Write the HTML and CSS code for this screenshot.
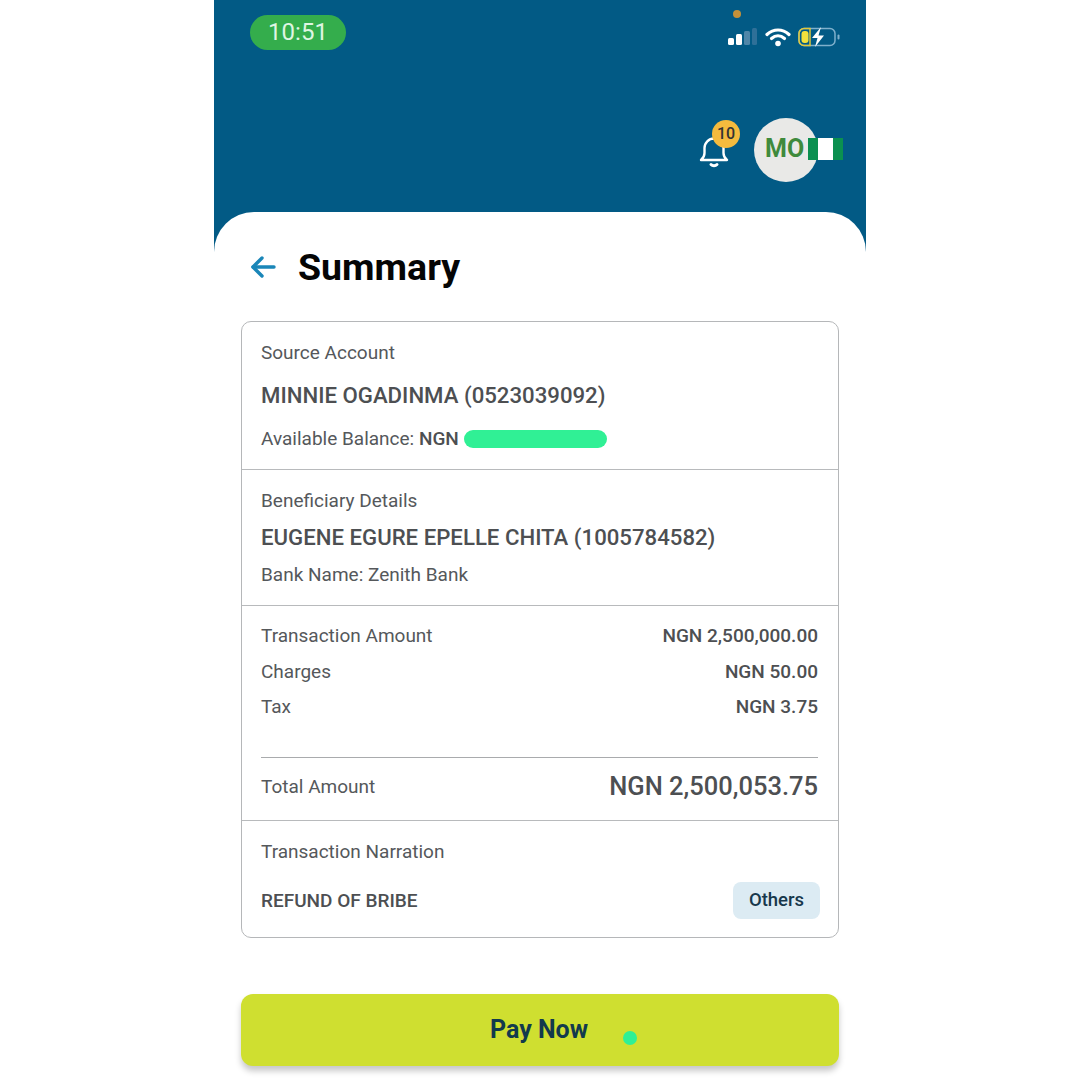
FILE: index.html
```html
<!DOCTYPE html>
<html lang="en">
<head>
    <meta charset="UTF-8">
    <title>Summary</title>
    <link rel="stylesheet" href="styles.css">
</head>
<body>
    <div class="phone">
        <div class="header">
            <div class="status-bar">
                <div class="time-pill">10:51</div>
                <div class="status-icons">
                    <svg width="30" height="18" viewBox="0 0 30 18">
                        <rect x="0" y="10" width="6" height="7" rx="1.5" fill="#fff"/>
                        <rect x="8" y="6" width="6" height="11" rx="1.5" fill="#fff"/>
                        <rect x="16" y="3" width="6" height="14" rx="1.5" fill="#4f86a8"/>
                        <rect x="24" y="0" width="5" height="17" rx="1.5" fill="#2f7098"/>
                    </svg>
                    <svg width="26" height="20" viewBox="0 0 26 20" fill="none" stroke="#fff" stroke-linecap="round">
                        <path d="M2 7.500C8.500 1.500 17.500 1.500 24 7.500" stroke-width="3.200"/>
                        <path d="M6.500 11.500C10.500 8 15.500 8 19.500 11.500" stroke-width="3.200"/>
                        <circle cx="13" cy="16.500" r="2.800" fill="#fff" stroke="none"/>
                    </svg>
                    <svg width="42" height="20" viewBox="0 0 42 20" fill="none">
                        <rect x="1" y="1.500" width="36" height="17" rx="5" stroke="#7fb0cc" stroke-width="1.500"/>
                        <rect x="3.500" y="4" width="7" height="12" rx="3" fill="#f2e13c"/>
                        <path d="M1 6.500a5 5 0 0 1 5-5h6v17H6a5 5 0 0 1-5-5z" stroke="#e0c83a" stroke-width="1.500"/>
                        <path d="M23 0l-9 11h5.500l-2.500 9 9-11.500h-5.500z" fill="#fff"/>
                        <rect x="39.500" y="7.500" width="2" height="5" rx="1" fill="#7fb0cc"/>
                    </svg>
                </div>
            </div>
            <span class="camera-dot"></span>
            <div class="header-actions">
                <div class="bell-wrap">
                    <svg width="30" height="36" viewBox="0 0 30 36" fill="none" stroke="#fff" stroke-width="2.400" stroke-linejoin="round" stroke-linecap="round">
                        <path d="M2 28c2.500-2 3.500-4 3.500-7v-5a9.500 9.500 0 0 1 19 0v5c0 3 1 5 3.500 7z"/>
                        <path d="M12 32.500c1.500 1.500 4.500 1.500 6 0" stroke-width="3"/>
                    </svg>
                    <span class="bell-badge">10</span>
                </div>
                <div class="avatar">
                    MO
                    <span class="flag"><i></i></span>
                </div>
            </div>
        </div>

        <div class="sheet">
            <div class="title-row">
                <svg width="26" height="24" viewBox="0 0 26 24" fill="none" stroke="#1a86b8" stroke-width="3.400" stroke-linecap="round" stroke-linejoin="round">
                    <path d="M24 12H3"/>
                    <path d="M12 3l-9 9 9 9"/>
                </svg>
                <h1>Summary</h1>
            </div>

            <div class="card">
                <div class="section source">
                    <div class="label">Source Account</div>
                    <div class="name">MINNIE OGADINMA (0523039092)</div>
                    <div class="label">Available Balance: <b>NGN</b><span class="scribble"></span></div>
                </div>
                <div class="section beneficiary">
                    <div class="label">Beneficiary Details</div>
                    <div class="name">EUGENE EGURE EPELLE CHITA (1005784582)</div>
                    <div class="label">Bank Name: Zenith Bank</div>
                </div>
                <div class="section amounts">
                    <div class="row"><span class="label">Transaction Amount</span><b class="value">NGN 2,500,000.00</b></div>
                    <div class="row"><span class="label">Charges</span><b class="value">NGN 50.00</b></div>
                    <div class="row"><span class="label">Tax</span><b class="value">NGN 3.75</b></div>
                    <div class="row total">
                        <span class="label">Total Amount</span><b class="total-value">NGN 2,500,053.75</b>
                    </div>
                </div>
                <div class="section narration">
                    <div class="label">Transaction Narration</div>
                    <div class="row narration-row">
                        <b class="value">REFUND OF BRIBE</b>
                        <span class="tag">Others</span>
                    </div>
                </div>
            </div>

            <div class="pay-btn">Pay Now<span class="touch-dot"></span></div>
        </div>
    </div>
</body>
</html>
```

FILE: styles.css
```css
* {
  box-sizing: border-box;
}
body {
  margin: 0;
  background: #fff;
  font-family: Roboto, "Liberation Sans", sans-serif;
  color: #4d4f52;
}
.phone {
  width: 652px;
  height: 1080px;
  margin: 0 auto;
  position: relative;
  overflow: hidden;
  background: #025a85;
}
.header {
  height: 212px;
  padding: 15px 26px 0 36px;
}
.status-bar {
  display: flex;
  justify-content: space-between;
  align-items: flex-start;
}
.time-pill {
  width: 96px;
  height: 35px;
  border-radius: 18px;
  background: #34ad4c;
  color: #dff5e2;
  font-size: 24px;
  line-height: 35px;
  text-align: center;
}
.status-icons {
  display: flex;
  align-items: center;
  gap: 7px;
  margin-top: 12px;
}
.camera-dot {
  position: absolute;
  left: 519px;
  top: 10px;
  width: 8px;
  height: 8px;
  border-radius: 50%;
  background: #c5913a;
}
.header-actions {
  display: flex;
  justify-content: flex-end;
  align-items: center;
  gap: 25px;
  margin-top: 68px;
  padding-right: 22px;
}
.bell-wrap {
  position: relative;
  width: 30px;
  height: 36px;
}
.bell-badge {
  position: absolute;
  left: 13px;
  top: -12px;
  width: 28px;
  height: 28px;
  border-radius: 50%;
  background: #f4bb3e;
  color: #333;
  font-size: 16px;
  font-weight: 500;
  line-height: 28px;
  text-align: center;
}
.avatar {
  position: relative;
  width: 64px;
  height: 64px;
  border-radius: 50%;
  background: #e9e9e7;
  color: #3f8a3c;
  font-size: 25px;
  font-weight: 700;
  line-height: 62px;
  padding-left: 11px;
}
.flag {
  position: absolute;
  left: 54px;
  top: 20px;
  width: 35px;
  height: 22px;
  background: #0b9050;
}
.flag i {
  display: block;
  width: 15px;
  height: 100%;
  margin-left: 10px;
  background: #fff;
}
.sheet {
  height: 868px;
  background: #fff;
  border-radius: 40px 40px 0 0;
  padding: 0 27px;
}
.title-row {
  display: flex;
  align-items: center;
  gap: 22px;
  height: 109px;
  padding: 0 0 0 9px;
}
.title-row h1 {
  margin: 0;
  font-size: 37.5px;
  font-weight: 700;
  color: #050505;
}
.card {
  height: 617px;
  border: 1px solid #b5b7b9;
  border-radius: 10px;
}
.section {
  padding: 0 20px 0 19px;
  border-bottom: 1px solid #b8babc;
}
.section:last-child {
  border-bottom: 0;
}
.label {
  font-size: 19px;
  color: #55585b;
}
.label b {
  font-weight: 500;
  color: #4d4f52;
}
.name {
  font-size: 22.2px;
  font-weight: 500;
  color: #4d4f52;
}
.source {
  height: 148px;
  padding-top: 19px;
}
.source .name {
  margin: 18px 0 19px;
}
.scribble {
  display: inline-block;
  width: 143px;
  height: 18px;
  margin-left: 5px;
  border-radius: 9px;
  background: #30f095;
  vertical-align: -3px;
}
.beneficiary {
  height: 136px;
  padding-top: 19px;
}
.beneficiary .name {
  margin: 12px 0 13px;
}
.amounts {
  height: 215px;
  padding-top: 19px;
}
.row {
  display: flex;
  justify-content: space-between;
  align-items: center;
  height: 21px;
  margin-bottom: 14.5px;
}
.value {
  font-size: 19px;
  font-weight: 500;
  color: #4d4f52;
}
.total {
  height: 63px;
  margin: 40px 0 0;
  padding-bottom: 6px;
  border-top: 1px solid #a9abad;
}
.total-value {
  font-size: 25.5px;
  font-weight: 500;
  color: #4d4f52;
}
.narration {
  padding-top: 19px;
  padding-right: 18px;
}
.narration-row {
  height: 37px;
  margin: 19px 0 0;
}
.tag {
  width: 87px;
  height: 37px;
  border-radius: 8px;
  background: #dcebf3;
  color: #17384c;
  font-size: 18.5px;
  font-weight: 500;
  line-height: 37px;
  text-align: center;
}
.pay-btn {
  position: relative;
  height: 72px;
  margin-top: 56px;
  border-radius: 12px;
  background: #cfdf30;
  color: #123a4d;
  box-shadow: 0 5px 6px rgba(0, 0, 0, 0.22);
  font-size: 25px;
  font-weight: 700;
  line-height: 71px;
  padding-right: 2px;
  text-align: center;
}
.touch-dot {
  position: absolute;
  left: 382px;
  top: 37px;
  width: 14px;
  height: 14px;
  border-radius: 50%;
  background: #30f095;
}
```
